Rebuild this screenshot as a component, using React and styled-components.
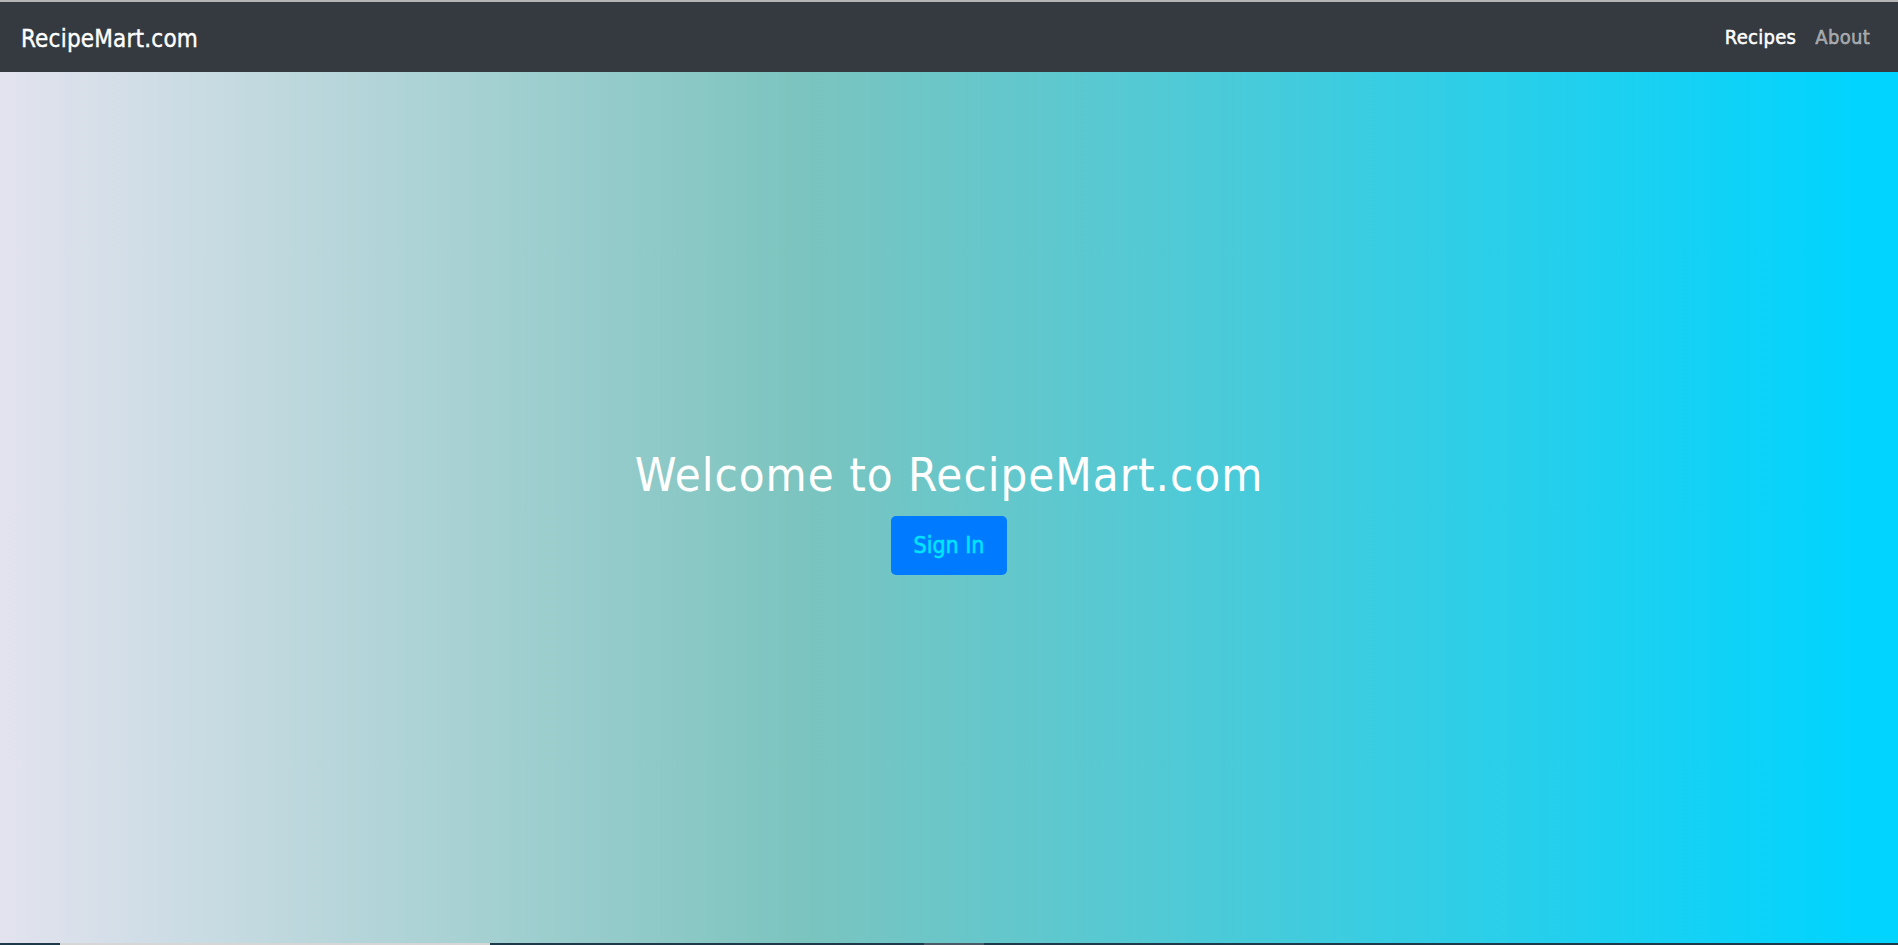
import React from 'react';
import styled, { createGlobalStyle } from 'styled-components';

const GlobalStyle = createGlobalStyle`
    html, body {
        margin: 0;
        padding: 0;
        height: 100%;
        overflow: hidden;
    }
    body {
        font-family: 'DejaVu Sans Condensed', 'DejaVu Sans', sans-serif;
    }
`;

const Page = styled.div`
    display: flex;
    flex-direction: column;
    height: 945px;
    border-top: 2px solid #b4b4b4;
    box-sizing: border-box;
`;

const Nav = styled.nav`
    display: flex;
    align-items: center;
    justify-content: space-between;
    height: 70px;
    padding: 0 21px;
    background-color: #343a40;
    flex-shrink: 0;
`;

const Brand = styled.a`
    color: #ffffff;
    font-size: 24px;
    text-decoration: none;
    margin-top: 3px;
    letter-spacing: 0.2px;
    -webkit-text-stroke: 0.4px #ffffff;
`;

const Links = styled.div`
    display: flex;
    gap: 19px;
    margin-right: 7px;
`;

const NavLink = styled.a`
    color: ${({ active }) => (active ? '#ffffff' : 'rgba(255, 255, 255, 0.5)')};
    font-size: 20px;
    letter-spacing: 0.3px;
    text-decoration: none;
    -webkit-text-stroke: 0.5px ${({ active }) => (active ? '#ffffff' : 'rgba(255, 255, 255, 0.5)')};
`;

const Hero = styled.main`
    flex: 1;
    display: flex;
    flex-direction: column;
    align-items: center;
    justify-content: center;
    background: linear-gradient(90deg, #e3e3ef 0%, #7cc4bf 42%, #00d4ff 98%);
`;

const Title = styled.h1`
    margin: 6px 0 14px;
    color: #ffffff;
    font-size: 47px;
    font-weight: normal;
    letter-spacing: 1px;
`;

const Button = styled.button`
    width: 116px;
    height: 59px;
    border: none;
    border-radius: 5px;
    background-color: #007bff;
    color: #00e5ff;
    font-family: inherit;
    font-size: 23px;
    -webkit-text-stroke: 0.5px #00e5ff;
    cursor: pointer;
`;

const Strip = styled.div`
    display: flex;
    height: 2px;
    flex-shrink: 0;
`;

const Segment = styled.div`
    width: ${({ w }) => w};
    flex: ${({ w }) => (w ? 'none' : 1)};
    background-color: ${({ c }) => c};
`;

const App = () => (
    <Page>
        <GlobalStyle />
        <Nav>
            <Brand href="#">RecipeMart.com</Brand>
            <Links>
                <NavLink href="#" active>Recipes</NavLink>
                <NavLink href="#">About</NavLink>
            </Links>
        </Nav>
        <Hero>
            <Title>Welcome to RecipeMart.com</Title>
            <Button>Sign In</Button>
        </Hero>
        <Strip>
            <Segment w="60px" c="#1e3a4a" />
            <Segment w="430px" c="#d6d6d6" />
            <Segment w="434px" c="#1e3a4a" />
            <Segment w="60px" c="#4a5a66" />
            <Segment c="#1e3a4a" />
        </Strip>
    </Page>
);

export default App;
